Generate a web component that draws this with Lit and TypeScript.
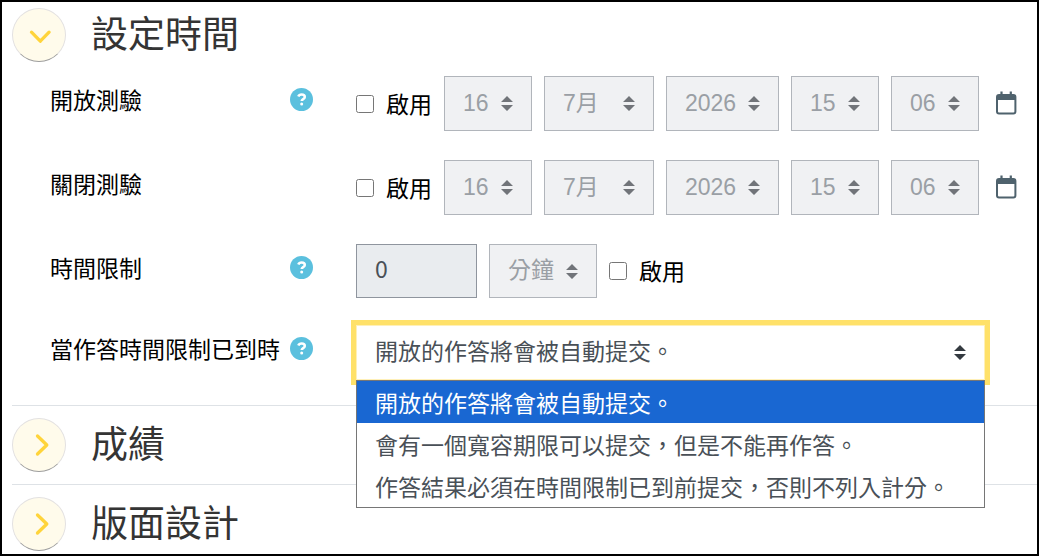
import { LitElement, html, css, svg, nothing, unsafeCSS } from "lit";
import { customElement, property, state } from "lit/decorators.js";
import { classMap } from "lit/directives/class-map.js";

const caret = (fill: string) =>
  `url("data:image/svg+xml,%3Csvg xmlns='http://www.w3.org/2000/svg' viewBox='0 0 4 5'%3E%3Cpath fill='%23${fill}' d='M2 0L0 2h4zm0 5L0 3h4z'/%3E%3C/svg%3E")`;

const controls = css`
  * {
    box-sizing: border-box;
  }
  select,
  input,
  button {
    font: inherit;
    margin: 0;
  }
  select {
    appearance: none;
    display: block;
    height: 55px;
    padding: 0 38px 6px 18px;
    border: 1px solid #8f959e;
    border-radius: 0;
    color: #495057;
    background: #fff ${unsafeCSS(caret("343a40"))} no-repeat right 18px center / 12px 15px;
  }
  select:disabled {
    opacity: 1;
    color: #9a9fa5;
    border-color: #b1b5bb;
    background-color: #f0f1f3;
    background-image: ${unsafeCSS(caret("717479"))};
  }
  .enable {
    display: flex;
    align-items: center;
    gap: 12px;
    color: #000;
    white-space: nowrap;
  }
  .enable input {
    width: 18px;
    height: 18px;
    flex: none;
  }
  .enable span {
    padding-bottom: 2px;
  }
`;

@customElement("help-button")
class HelpButton extends LitElement {
  @property() topic = "";

  static styles = css`
    :host {
      display: block;
      flex: none;
    }
    button {
      display: block;
      padding: 0;
      border: 0;
      background: none;
      cursor: pointer;
    }
    svg {
      display: block;
      width: 23px;
      height: 23px;
    }
  `;

  render() {
    return html`<button type="button" aria-label=${this.topic}>
      <svg viewBox="0 0 23 23" aria-hidden="true">
        <circle cx="11.5" cy="11.5" r="11.5" fill="#5bc0de" />
        <path d="M8.3 8.6C8.9 7.2 10 6.5 11.6 6.5c1.9 0 3.2 1 3.2 2.5 0 2.2-3.1 2.1-3.1 4.1" fill="none" stroke="#fff" stroke-width="2.5" />
        <circle cx="11.7" cy="16.1" r="1.5" fill="#fff" />
      </svg>
    </button>`;
  }
}

@customElement("section-heading")
class SectionHeading extends LitElement {
  @property() label = "";
  @property({ type: Boolean }) open = false;

  static styles = css`
    :host {
      display: flex;
      align-items: center;
      gap: 25px;
    }
    button {
      box-sizing: border-box;
      width: 54px;
      height: 54px;
      flex: none;
      padding: 0;
      border: 1px solid #e3e1e1;
      border-bottom-color: #9c9c9c;
      border-radius: 50%;
      background: #fffbeb;
      cursor: pointer;
    }
    svg {
      display: block;
      width: 52px;
      height: 52px;
    }
    h3 {
      margin: 0;
      padding-bottom: 6px;
      font-size: 37px;
      line-height: 48px;
      font-weight: 400;
      color: #343434;
    }
  `;

  render() {
    return html`
      <button type="button" aria-expanded=${this.open ? "true" : "false"} aria-label=${this.label}>
        <svg viewBox="0 0 52 52" fill="none" stroke="#ffd43b" stroke-width="3.3" stroke-linecap="round" stroke-linejoin="round" aria-hidden="true">
          ${this.open ? svg`<path d="M18.5 23.2l8.8 9 8.8-9" />` : svg`<path d="M24.5 17l9.3 9-9.3 9" />`}
        </svg>
      </button>
      <h3>${this.label}</h3>
    `;
  }
}

const dateParts = [
  { name: "日", value: "16", size: "short" },
  { name: "月", value: "7月", size: "month" },
  { name: "年", value: "2026", size: "year" },
  { name: "時", value: "15", size: "short" },
  { name: "分", value: "06", size: "short" },
];

@customElement("date-fields")
class DateFields extends LitElement {
  static styles = [
    controls,
    css`
      .group {
        display: flex;
        align-items: center;
        gap: 12px;
        padding-bottom: 2px;
      }
      select {
        font-family: "Liberation Sans", "Noto Sans CJK TC", sans-serif;
        flex: none;
        padding-bottom: 2px;
      }
      .short {
        width: 88px;
      }
      .month {
        width: 110px;
      }
      .year {
        width: 113px;
      }
      .calendar {
        display: block;
        padding: 0 0 2px;
        margin-left: 4px;
        border: 0;
        background: none;
        cursor: pointer;
      }
      .calendar svg {
        display: block;
        width: 22px;
        height: 24px;
      }
    `,
  ];

  render() {
    return html`<div class="group">
      <label class="enable"><input type="checkbox" /><span>啟用</span></label>
      ${dateParts.map(
        (p) => html`<select class=${p.size} aria-label=${p.name} disabled><option>${p.value}</option></select>`
      )}
      <button class="calendar" type="button" aria-label="日曆">
        <svg viewBox="0 0 22 24" aria-hidden="true">
          <path d="M6.5 0.5v4M15.8 0.5v4" stroke="#4f626d" stroke-width="2.2" fill="none" />
          <rect x="2" y="4" width="18.4" height="18.6" rx="2" fill="none" stroke="#4f626d" stroke-width="2" />
          <path d="M2 4h18.4v5H2z" fill="#4f626d" />
        </svg>
      </button>
    </div>`;
  }
}

const overdueChoices = [
  "開放的作答將會被自動提交。",
  "會有一個寬容期限可以提交，但是不能再作答。",
  "作答結果必須在時間限制已到前提交，否則不列入計分。",
];

@customElement("app-root")
class AppRoot extends LitElement {
  @state() private choice = 0;
  @state() private listOpen = true;

  static styles = [
    controls,
    css`
      :host {
        display: block;
        font-family: "Noto Sans CJK TC", sans-serif;
        font-size: 23px;
        line-height: 34px;
        color: #000;
      }
      .page {
        min-height: 100vh;
        padding: 6px 0 0 10px;
        border: 2px solid #000;
        background: #fff;
      }
      .fields {
        display: grid;
        gap: 27px;
        padding: 14px 0 25px 38px;
      }
      .row {
        display: grid;
        grid-template-columns: 306px minmax(0, 1fr);
        align-items: start;
      }
      .name {
        display: flex;
        align-items: center;
        justify-content: space-between;
        padding: 6px 43px 0 0;
        white-space: nowrap;
      }
      .duration {
        display: flex;
        align-items: center;
        gap: 12px;
      }
      .duration select,
      .amount {
        height: 54px;
      }
      .amount {
        width: 121px;
        padding: 0 18px 6px;
        border: 1px solid #8f959e;
        border-radius: 0;
        color: #495057;
        background: #e9ecef;
      }
      .unit {
        width: 108px;
      }
      .picker {
        position: relative;
        margin-right: 52px;
      }
      .picker select {
        width: 100%;
        border-color: #fff0b8;
        outline: none;
        box-shadow: 0 0 0 5px #ffe169;
      }
      .list {
        position: absolute;
        top: 100%;
        left: 0;
        right: 0;
        z-index: 1;
        margin: 0;
        padding: 0;
        list-style: none;
        border: 1px solid #767676;
        background: #fff;
        color: #495057;
      }
      .item {
        padding: 4px 18px;
        cursor: default;
      }
      .current {
        background: #1967d2;
        color: #fff;
      }
      .section {
        padding: 12px 0;
        border-top: 1px solid #dee2e6;
      }
      .section:last-child {
        padding-bottom: 0;
      }
    `,
  ];

  private pick(i: number) {
    this.choice = i;
    this.listOpen = false;
  }

  render() {
    return html`<main class="page">
      <section-heading label="設定時間" open></section-heading>
      <form class="fields">
        <div class="row">
          <div class="name"><span>開放測驗</span><help-button topic="開放測驗"></help-button></div>
          <date-fields></date-fields>
        </div>
        <div class="row">
          <div class="name"><span>關閉測驗</span></div>
          <date-fields></date-fields>
        </div>
        <div class="row">
          <div class="name"><label for="limit">時間限制</label><help-button topic="時間限制"></help-button></div>
          <div class="duration">
            <input class="amount" id="limit" type="text" value="0" disabled />
            <select class="unit" aria-label="時間單位" disabled><option>分鐘</option></select>
            <label class="enable"><input type="checkbox" /><span>啟用</span></label>
          </div>
        </div>
        <div class="row">
          <div class="name">
            <label for="overdue">當作答時間限制已到時</label><help-button topic="當作答時間限制已到時"></help-button>
          </div>
          <div class="picker">
            <select id="overdue" @change=${(e: Event) => this.pick((e.target as HTMLSelectElement).selectedIndex)}>
              ${overdueChoices.map((c, i) => html`<option .selected=${i === this.choice}>${c}</option>`)}
            </select>
            ${this.listOpen
              ? html`<ul class="list" role="listbox">
                  ${overdueChoices.map(
                    (c, i) => html`<li
                      class=${classMap({ item: true, current: i === this.choice })}
                      role="option"
                      aria-selected=${i === this.choice ? "true" : "false"}
                      @click=${() => this.pick(i)}
                    >${c}</li>`
                  )}
                </ul>`
              : nothing}
          </div>
        </div>
      </form>
      <div class="section"><section-heading label="成績"></section-heading></div>
      <div class="section"><section-heading label="版面設計"></section-heading></div>
    </main>`;
  }
}
